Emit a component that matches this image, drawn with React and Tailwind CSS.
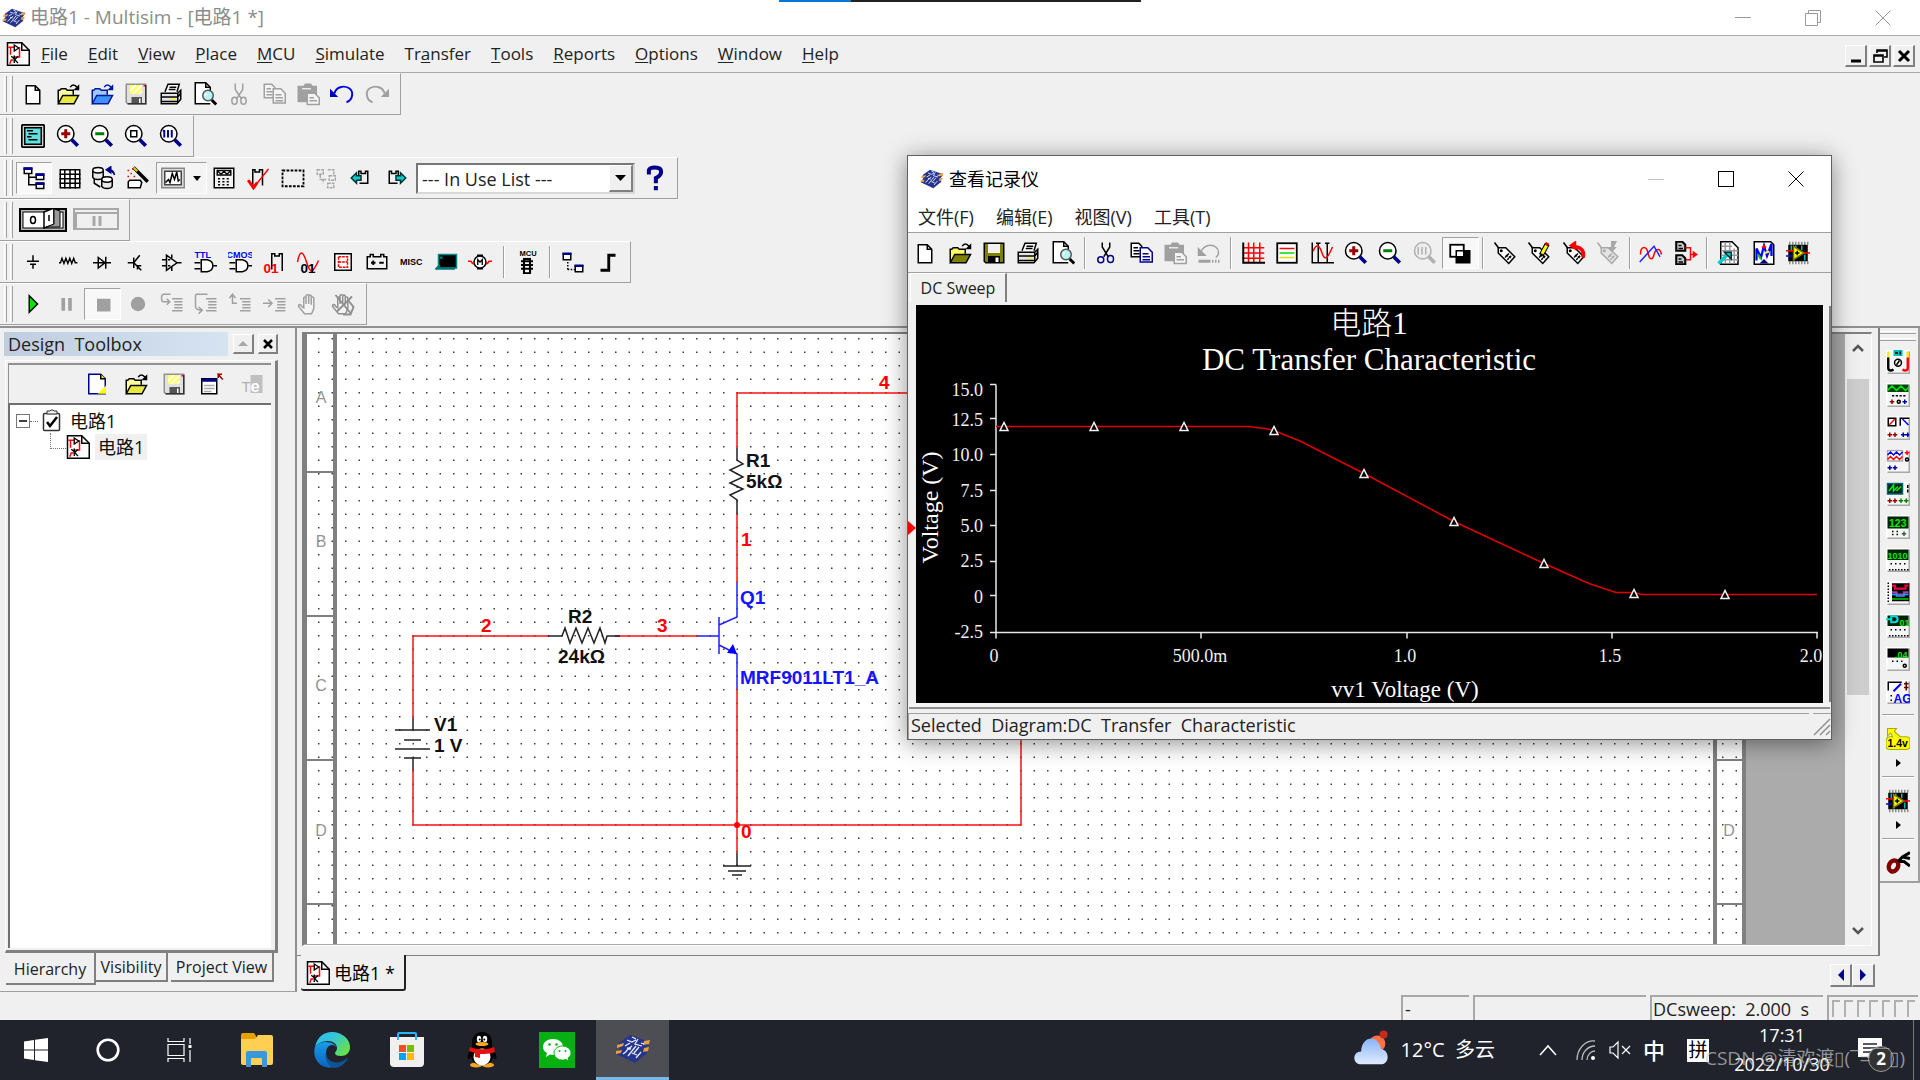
import React from "react";

const PIX = '"Liberation Sans", sans-serif';

function Svg({ children, className = "h-6 w-6", box = "0 0 16 16" }) {
  return (
    <svg viewBox={box} className={`${className} shrink-0`} fill="none" stroke="#000" strokeWidth="1" aria-hidden="true">
      {children}
    </svg>
  );
}

function T({ x, y, s = 6, f = "#000", children }) {
  return (
    <text x={x} y={y} fontSize={s} fill={f} stroke="none" fontWeight="700" fontFamily={PIX}>
      {children}
    </text>
  );
}

const folder = (back, front, line) => (
  <>
    <path d="M1.5 14V5.500h1l1-1h3l1 1h4v3" fill={back} stroke={line} />
    <path d="M1.500 14.500l3-5.500h10.500l-3 5.500z" fill={front} stroke={line} />
    <path d="M9.500 3.500c1-2 3-2 4.500 0" stroke={line} />
    <path d="M15.500 1.500v4h-4z" fill={line} stroke="none" />
  </>
);
const lens = (inner, c = "#000", h = "#00008b", f = "#fff") => (
  <>
    <circle cx="6.500" cy="6.500" r="5.500" fill={f} stroke={c} />
    <path d="M10.500 10.500l4 4" stroke={h} strokeWidth="2.500" />
    {inner}
  </>
);
const tag = (c = "#000") => (
  <>
    <path d="M1 1l3 4" stroke={c} />
    <path d="M3.500 4.500l5 0 6 6-4 4.500-7-7z" fill={c === "#000" ? "#fff" : "#e4e4e4"} stroke={c} />
    <circle cx="5.500" cy="6.500" r="1" fill={c} stroke="none" />
    <path d="M8 11l3-3M9.500 12.500l3-3M8.500 9.500l4 2" stroke={c} strokeDasharray="1.500 .7" />
  </>
);
const gate = (
  <>
    <path d="M5.500 6.500h4c5 1 5 7 0 8h-4z" fill="#fff" />
    <path d="M1 8.500h4M1 12.500h4M13.500 10.500h2.500" />
  </>
);
const steps = (
  <path d="M8 4.500h7M9.500 6.500h5.500M9.500 8.500h5.500M9.500 10.500h5.500M8 12.500h7" stroke="#a0a0a0" />
);
const sheet = <path d="M2.500.500h7.500l4 4v11h-11.500z" fill="#fff" />;
const printer = (y = "#ffff00") => (
  <>
    <path d="M4 6.500L6 1.500h7.500L12 6.500" fill="#fff" />
    <path d="M7 3.500h4.500M6.500 5h4.500" />
    <path d="M1.500 7.500h11l2-2v6l-2.500 3h-10.500z" fill="#e4e4e4" />
    <path d="M1.500 10h11l2-2.500M2 13h10M12.500 8v6" />
    <path d="M8 11.500h3" stroke={y} />
  </>
);
const schem = (
  <>
    <path d="M1 .500h9.500l5 5v10h-14.500z" fill="#fff" />
    <path d="M10.500.500v5h5" />
    <path d="M1.500 3.500h4M8 4h1v6h-4M3 4v4.500M2.500 14.500l1-2.500h1.500" stroke="#f00" />
    <path d="M5.500 2l3 2-3 2zM3.500 9.500l2.500 2 2-2M5.500 9v5M6 12l2 2" strokeWidth=".9" />
  </>
);
const opamp = (
  <>
    <path d="M2 1.500h13M2 14.500h13" stroke="#8c8c8c" strokeWidth="2" strokeDasharray="1 1" />
    <rect x="1.500" y="2.500" width="13" height="11" fill="#000" stroke="none" />
    <path d="M3.500 3v4M6.500 3v2M10.500 3v3M12.500 9v4M5.500 11v2" stroke="#00b4b4" />
    <path d="M5 3.500v9l7-4.500z" fill="#ff0" stroke="#770" />
    <path d="M0 6.500h5M12 8h4" stroke="#f00" />
    <path d="M0 10h4" stroke="#00f" />
    <path d="M6 8h3M7.500 6.500v3" />
  </>
);

const ICON = {
  new: <path d="M3.500 2.500h6l3 3v9h-9zM9.500 2.500v3h3" fill="#fff" />,
  open: folder("#ffff9c", "#e8e840", "#000"),
  openBlue: folder("#9cc8ff", "#4090f8", "#0018a0"),
  openOlive: folder("#ffff60", "#808000", "#000"),
  save: (
    <>
      <path d="M1.500 1.500h13v13h-12l-1-1z" fill="#e0e0e0" stroke="#909090" />
      <path d="M14.500 2v12.500h-12" stroke="#333" />
      <path d="M4 2h8v6h-8z" fill="#ffff70" stroke="none" />
      <path d="M4 6l4-4M6 8l6-6M10 8l2-2" stroke="#fff" />
      <path d="M5 10h7v4h-7z" fill="#555" stroke="none" />
      <path d="M10.500 11v3" stroke="#fff" />
      <path d="M13 2.500h1" stroke="#f00" />
    </>
  ),
  saveOlive: (
    <>
      <path d="M1.500 1.500h13v13h-12l-1-1z" fill="#808000" />
      <path d="M4 2h8v6h-8z" fill="#f0f0f0" stroke="none" />
      <path d="M4 10h8v4.500h-8z" fill="#000" stroke="none" />
      <path d="M10 11v3" stroke="#fff" strokeWidth="2" />
    </>
  ),
  print: printer(),
  preview: (
    <>
      <path d="M11.500 14.500h-10v-14h7l3 3v3" fill="#fff" />
      <path d="M8.500.500v3h3" />
      <circle cx="10" cy="9" r="3.500" fill="#b8f4f4" stroke="#555" />
      <path d="M9 7.500l-1 2" stroke="#fff" />
      <path d="M12.500 12l3 3" strokeWidth="2" />
    </>
  ),
  cutGray: (
    <g stroke="#a0a0a0">
      <path d="M5.500 1v4l4 6M10.500 1v4l-4 6" />
      <ellipse cx="5" cy="12.500" rx="1.800" ry="2.300" />
      <ellipse cx="11" cy="12.500" rx="1.800" ry="2.300" />
    </g>
  ),
  cut: (
    <>
      <path d="M5.500 1v3l4 6.500M10.500 1v3l-4 6.500" />
      <ellipse cx="4.500" cy="12.500" rx="2" ry="2" stroke="#00008b" />
      <ellipse cx="11" cy="12" rx="2" ry="2.300" stroke="#00008b" />
    </>
  ),
  copyGray: (
    <g stroke="#a0a0a0" fill="#f4f4f4">
      <path d="M1.500 1.500h5l2 2v7h-7zM3 4.500h3M3 6.500h4M3 8.500h4" />
      <path d="M7.500 4.500h5l3 3v6.500h-8zM9 8.500h4M9 10.500h5M9 12.500h5" />
    </g>
  ),
  copy: (
    <>
      <path d="M1.500 1.500h5l2 2v7h-7zM3 4.500h3M3 6.500h4M3 8.500h4" fill="#fff" />
      <path d="M7.500 4.500h5l3 3v6.500h-8zM9 8.500h4M9 10.500h5M9 12.500h5" fill="#fff" stroke="#00008b" />
    </>
  ),
  paste: (
    <>
      <path d="M1 2.500h4l1-1.500h4l1 1.500h3v11h-13z" fill="#a0a0a0" stroke="none" />
      <path d="M4 4.500h6" stroke="#e8e8e8" />
      <path d="M7.500 7.500h5l3 3v4.500h-8z" fill="#f4f4f4" stroke="#a0a0a0" />
      <path d="M9 10.500h3M9 12.500h5" stroke="#a0a0a0" />
    </>
  ),
  undo: (
    <>
      <path d="M3 7.500c1-4 6-5.500 9.500-3.500s3 8-1.500 9.500" stroke="#0000e8" strokeWidth="1.300" />
      <path d="M0 4.500v5.500h5.500z" fill="#0000c0" stroke="none" />
    </>
  ),
  redo: (
    <>
      <path d="M13 7.500c-1-4-6-5.500-9.500-3.500s-3 8 1.500 9.500" stroke="#a0a0a0" strokeWidth="1.300" />
      <path d="M16 4.500v5.500h-5.500z" fill="#a0a0a0" stroke="none" />
    </>
  ),
  undoGray: (
    <>
      <path d="M3 6.500c2-4 7-4.500 9.500-2.500s2.500 5 0 7" stroke="#a0a0a0" />
      <path d="M.500 4v6h6z" fill="#a0a0a0" stroke="none" />
      <path d="M1 13.500h8M10 13.500h1M12 13.500h1M14 13.500h1" stroke="#a0a0a0" strokeWidth="2" />
    </>
  ),
  fullscreen: (
    <>
      <rect x=".500" y=".500" width="15" height="15" rx="1" fill="#d0d0d0" strokeWidth="1.200" />
      <rect x="2.500" y="2.500" width="11" height="11" fill="#60e0e0" />
      <path d="M4 4.500h4M5 6.500h6M4 8.500h3M5 10.500h6" />
    </>
  ),
  zoomIn: lens(<path d="M6.500 3.500v6M3.500 6.500h6" stroke="#900" strokeWidth="2" />),
  zoomOut: lens(<path d="M3.500 6.500h6" stroke="#008000" strokeWidth="2" />),
  zoomArea: lens(<rect x="4.500" y="4.500" width="4" height="4" />),
  zoomFit: lens(<path d="M3.500 4v5M6 4v5M8.500 4v5M2.500 4.500h1" stroke="#00008b" strokeWidth="1.300" />),
  zoomGray: lens(<path d="M3.500 4v5M6 4v5M8.500 4v5" stroke="#b0b0b0" />, "#b0b0b0", "#b0b0b0", "#eee"),
  tree: (
    <>
      <path d="M4.500 5v7.500h5M4.500 7.500h5" />
      <g fill="#fff">
        <path d="M1.500 1.500h5v3.500h-5zM9.500 5.500h5v3.500h-5zM9.500 11.500h5v3.500h-5z" />
        <path d="M1 1.700h6M9 5.700h6M9 11.700h6" stroke="#00008b" strokeWidth="1.800" />
      </g>
    </>
  ),
  grid: (
    <>
      <rect x="1.500" y="2.500" width="13" height="12" fill="#fff" />
      <path d="M1 5.500h14M1 8.500h14M1 11.500h14M4.500 2v13M8 2v13M11.500 2v13" />
    </>
  ),
  database: (
    <g fill="#e8e8e8">
      <path d="M.500 3v4.500c1 2 6 2 7 0V3" />
      <ellipse cx="4" cy="2.800" rx="3.500" ry="1.800" fill="#fff" />
      <path d="M6.500 9v4.500c1 2 6 2 7 0V9" />
      <ellipse cx="10" cy="9" rx="3.500" ry="1.800" fill="#fff" />
      <path d="M1.500 8.500v3l4 2.500" fill="none" />
      <path d="M11.500 2.500c2 0 3 1 3.500 3.500M9.500 2.500l3-2v4z" fill="#00008b" stroke="#00008b" />
    </g>
  ),
  wand: (
    <>
      <path d="M5 1l9.500 9.500" strokeWidth="2.200" />
      <path d="M5 1l2.500 2.500" stroke="#cc0" strokeWidth="1.600" />
      <path d="M1 3h1M3 5h1M1 7h1M4 2h1M5 7h1" stroke="#e00" />
      <path d="M2.500 9.500h7l1 1.500-1 3.500h-8v-4z" fill="#fff" />
    </>
  ),
  graph: (
    <>
      <rect x=".500" y="1.500" width="15" height="13" fill="#ddd" stroke="#888" />
      <rect x="2.500" y="3.500" width="11" height="9" fill="#fff" stroke="#444" />
      <path d="M3 11l2-2 1 2 1.500-6 1.500 4 1.500-5 1 6 1-1" />
    </>
  ),
  calc: (
    <>
      <rect x="1.500" y="1.500" width="13" height="13" fill="#f4f4f4" />
      <rect x="3.500" y="3" width="9" height="3" fill="#fff" />
      <path d="M4 3.500l2 2 2-2 2 2 2-2" />
      <path d="M4 8.500h8M4 10.500h8M4 12.500h8" strokeDasharray="1.400 1.500" />
    </>
  ),
  check: (
    <>
      <path d="M4.500 13v-10.500h1.500v1.500h3v-1.500h2V13" />
      <path d="M1.500 9.500l3.500 5L15 2" stroke="#f00" />
      <path d="M1.500 9.500l3.500 5 2.500-3.500" stroke="#f00" strokeWidth="2" />
    </>
  ),
  select: <rect x="1" y="3" width="14" height="10.500" strokeDasharray="1.800 .9" strokeWidth="1.200" />,
  swap: (
    <g stroke="#a8a8a8">
      <path d="M1.500 2.500h4v3h-4zM3.500 6v3h4M8.500 2.500h4v4M9.500 6.500h4v3h-4zM5.500 8.500v3M8.500 11.500h4v3h-4z" strokeDasharray="2 .6" />
    </g>
  ),
  backAnn: (
    <>
      <path d="M6.500 6V3.500h1.500v1.500h3v-1.500h1.500v8h-5.500" />
      <path d="M1.500 8l3.500-3.500v2h3v3H5v2z" fill="#0cc" stroke="#033" />
    </>
  ),
  fwdAnn: (
    <>
      <path d="M9.500 6V3.500h-1.500v1.500h-3v-1.500h-1.500v8h5.500" />
      <path d="M14.500 8l-3.500-3.500v2h-3v3h3v2z" fill="#0cc" stroke="#033" />
    </>
  ),
  source: <path d="M8 3.500v4M4 7.500h8M6 9.500h4M8 10v2.500" />,
  resistor: <path d="M2 8.500h1l1-3 1.300 3.500 1.300-3.500 1.300 3.500 1.300-3.500 1.300 3.500 1.300-3.500 1 3h1.500" strokeWidth=".9" />,
  diode: <path d="M2 8.500h12M5.500 5v7l4.500-3.500zM10.500 4.500v8" />,
  transistor: <path d="M2.500 8.500h3.500M6.500 5v7M6.500 8.500l4-5M6.500 8.500l5 5M9 10.500v2.500M8.500 10.500h3" />,
  opampIcon: (
    <path d="M5 3.500v10l7-5zM2 6.500h3M2 10.500h3M12 8.500h3M8.500 3v3M8.500 11v3M6 6.500h1.500M6 10.500h1.500" />
  ),
  ttl: (
    <>
      <T x="1" y="5" s="6" f="#00f">TTL</T>
      {gate}
    </>
  ),
  cmos: (
    <>
      <T x="-1" y="5" s="6" f="#00f">CMOS</T>
      {gate}
    </>
  ),
  miscDigital: (
    <>
      <path d="M6.500 13V2.500h2v1.500h3v-1.500h2V14" />
      <T x="1" y="15" s="9" f="#f00">01</T>
    </>
  ),
  mixed: (
    <>
      <path d="M1 8c1.500-8 3.500-8 6 0s4 8 8-1" stroke="#f00" />
      <T x="3" y="15" s="9">01</T>
    </>
  ),
  indicator: (
    <>
      <rect x="2.500" y="2.500" width="11" height="11" fill="#fff" />
      <path d="M5 4.500h6v7H5zM5 8h6" stroke="#f00" strokeDasharray="1.800 .6" />
    </>
  ),
  power: (
    <>
      <path d="M1.500 4.500h2v-1.500h2v1.500h5v-1.500h2v1.500h2v8h-13z" />
      <path d="M4 8.500h3M5.500 7v3M9.500 8.500h3" strokeWidth="1.200" />
    </>
  ),
  misc: <T x="0" y="10" s="6">MISC</T>,
  periph: (
    <>
      <rect x="3" y="3" width="12" height="9" fill="#000" stroke="#088" />
      <path d="M1 12.500h13M4 10l-3 3M4 5h1v1" stroke="#077" strokeWidth="1.400" />
    </>
  ),
  motor: (
    <>
      <circle cx="8" cy="8" r="4" fill="#fff" />
      <path d="M0 7.500h2l1 1.500h1M16 7.500h-2l-1 1.500h-1" stroke="#f00" />
      <path d="M6.500 10V6.500L8 8l1.500-1.500V10" strokeWidth=".9" />
      <path d="M6 3.500h4M6 12.500h4" />
    </>
  ),
  mcu: (
    <>
      <T x="3" y="4" s="5">MCU</T>
      <rect x="6" y="6" width="4" height="9.500" fill="#fff" strokeWidth="1.400" />
      <path d="M4 7.500h8M4 10h8M4 12.500h8" strokeWidth="1.200" />
    </>
  ),
  hier: (
    <>
      <rect x="1.500" y="2.500" width="5" height="4" fill="#fff" />
      <rect x="9.500" y="10.500" width="5" height="4" fill="#fff" />
      <path d="M1 2.500h6M9 10.500h6" stroke="#00008b" strokeWidth="1.800" />
      <path d="M4.500 8v5M4.500 13h5" strokeDasharray="1 1" />
    </>
  ),
  bus: <path d="M3 13.500h5.500V3.500H13" strokeWidth="1.900" />,
  play: <path d="M5.500 2.500v11l5.500-5.500z" fill="#00e800" />,
  pause: <path d="M5.500 4v8.500M10 4v8.500" stroke="#a0a0a0" strokeWidth="2.400" />,
  stop: <rect x="4" y="4.500" width="9" height="8.500" fill="#a0a0a0" stroke="none" />,
  record: <circle cx="8" cy="8" r="4.800" fill="#a0a0a0" stroke="none" />,
  stepInto: (
    <>
      {steps}
      <path d="M7 1.500H2.500c-2 0-2 5 0 5h4M4.500 4.500l2 2-2 2" stroke="#a0a0a0" />
    </>
  ),
  stepOver: (
    <>
      {steps}
      <path d="M9 1.500H2c-1 0-1 1-1 1v7c0 2 1 2.500 4 2.500M3 10l2.500 2L3 14.500" stroke="#a0a0a0" />
    </>
  ),
  stepOut: (
    <>
      {steps}
      <path d="M6 7.500H3V2M1 4l2-2.500L5 4" stroke="#a0a0a0" />
    </>
  ),
  runTo: (
    <>
      {steps}
      <path d="M0 7.500h6M3.500 5l2.500 2.500L3.500 10" stroke="#a0a0a0" />
    </>
  ),
  hand: (
    <path d="M5 14.500l-4-5c0-1.500 1.500-1.500 2 0l1.500 1V4c0-1 1.500-1 1.500 0v4V2.500c0-1 1.800-1 1.800 0V8 2.800c0-1 1.700-1 1.700 0V8.500 4c0-1 1.700-1 1.700 0v7l-1.500 3.500z" stroke="#a0a0a0" fill="#f4f4f4" />
  ),
  handOff: (
    <g stroke="#909090">
      <path d="M5 14.500l-4-5c0-1.500 1.500-1.500 2 0l1.500 1V4c0-1 1.500-1 1.500 0v4V2.500c0-1 1.800-1 1.800 0V8 2.800c0-1 1.700-1 1.700 0V8.500 4c0-1 1.700-1 1.700 0v7l-1.500 3.500z" fill="#f4f4f4" />
      <path d="M3 2l10 12M14 3L4 13M11 5l4 5-2 5H8" strokeWidth="1.300" />
    </g>
  ),
  plotGrid: (
    <>
      <path d="M1 4.500h14.500M1 8h14.500M1 11.500h14.500M5 1v13.500M8.500 1v13.500M12.500 1v13.500" stroke="#f00" />
      <path d="M1.500 1v13.500H16" strokeWidth="1.300" />
    </>
  ),
  legend: (
    <>
      <rect x="1.500" y="1.500" width="13" height="13" fill="#fff" strokeWidth="1.200" />
      <path d="M3 5h10" stroke="#f00" />
      <path d="M3 8h10" stroke="#0d0" />
      <path d="M3 11h10" stroke="#dd0" />
    </>
  ),
  cursors: (
    <>
      <path d="M1.500 1v13.500H16M5.500 1v13M11.500 1v13M4 1.500h3M10 1.500h3" />
      <path d="M2 7c2-5 4-5 6 1s4 3 7-4" stroke="#f00" />
    </>
  ),
  invert: (
    <>
      <rect x="5.500" y="6.500" width="9" height="8" fill="#000" />
      <rect x="1.500" y="2.500" width="9" height="8" fill="#fff" strokeWidth="1.200" />
      <rect x="5.500" y="6.500" width="5" height="4" fill="#fff" />
    </>
  ),
  tag: tag(),
  tagEdit: (
    <>
      {tag()}
      <path d="M9.500 9.500l4-7.500" strokeWidth="3.400" />
      <path d="M10 8.500l3-5.500" stroke="#ff0" strokeWidth="2" />
      <path d="M13 2.800l.8-1.500" stroke="#d00" strokeWidth="2.500" />
    </>
  ),
  tagUndo: (
    <>
      {tag()}
      <path d="M14 11c1-4-1-7-5-7" stroke="#f00" strokeWidth="2.500" />
      <path d="M4.500 3l5-3.500v7z" fill="#f00" stroke="none" />
    </>
  ),
  tagGray: (
    <>
      {tag("#a8a8a8")}
      <path d="M14 0h-4v4h-3l3.500 3.500L14 4h-2z" fill="#a8a8a8" stroke="none" />
    </>
  ),
  traces: (
    <>
      <path d="M1 9c0-6 4-6 5-1s3 5 4 1 4-5 5 0" stroke="#f00" />
      <path d="M.500 14L10 3.500l4 7" stroke="#22f" />
    </>
  ),
  overlay: (
    <>
      <path d="M1.500.500h4l2 2v4h-6zM1.500 9.500h4l2 2v4h-6z" fill="#ccc" strokeWidth="1.400" />
      <path d="M3 3h2M3 5h3M3 12h2M3 14h3" />
      <path d="M7.500 4.500h3.500v8H8M11 9h3" stroke="#f00" />
      <path d="M12.500 6.500L16 9l-3.500 2.500z" fill="#f00" stroke="none" />
    </>
  ),
  excel: (
    <>
      {sheet}
      <path d="M3 3.500h7M3 6.500h11M3 9.500h11M3 12.500h11M5.500 1v14M8.500 1v14M11.500 5v10" stroke="#999" />
      <path d="M1 15l6-6" stroke="#0cc" strokeWidth="2.200" />
      <path d="M5 7.500h4.500V12z" fill="#0cc" stroke="#033" />
    </>
  ),
  labview: (
    <>
      <path d="M1.500.500h11l2 2v13h-13z" fill="#fff" />
      <path d="M3 13V5l3 6 2-8 2 7 3-8v8" stroke="#00f" strokeWidth="1.500" />
      <path d="M4 9l2 3" stroke="#0c0" strokeWidth="1.500" />
      <path d="M8.500 8l3-1" stroke="#ff0" strokeWidth="1.500" />
      <path d="M8 2v3M6.500 4h3" stroke="#f00" />
      <path d="M5 15l3-3 3 3z" fill="#00008b" stroke="none" />
    </>
  ),
  elvis: opamp,
  docNew: (
    <>
      <path d="M2.500 1.500h8l3 3v10h-11z" fill="#fff" stroke="#00008b" />
      <path d="M14 9v5.500H8.500z" fill="#ff0" stroke="none" />
      <path d="M10.500 1.500v3h3" fill="#ff0" />
    </>
  ),
  windowOut: (
    <>
      <rect x=".500" y="4.500" width="10" height="10" fill="#fff" />
      <path d="M.500 5.500h10" stroke="#00008b" strokeWidth="2" />
      <path d="M2 9h7M2 11h7M2 13h5" stroke="#aaa" />
      <path d="M11 1.500h3M11.500 1v3M11 1l3.500 4" stroke="#900" />
    </>
  ),
  te: (
    <>
      <rect x="7" y="2" width="8" height="12" fill="#c0c0c0" stroke="none" />
      <text x="1" y="13" fontSize="10" fill="#b0b0b0" stroke="none" fontFamily={PIX}>T</text>
      <text x="7" y="13" fontSize="11" fill="#fff" stroke="none" fontWeight="700" fontFamily={PIX}>e</text>
    </>
  ),
  schem,
};

const inst = (body) => (
  <>
    <path d="M0 0h16v16H0z" fill="#f6f6f6" stroke="none" />
    <path d="M.500 15V.500H15" stroke="#fff" />
    <path d="M1 15.500h14.500V1" stroke="#a8a8a8" />
    {body}
  </>
);
const INSTRUMENTS = [
  ["Multimeter", inst(<><rect x="5" y="0" width="6" height="4" fill="#0bb" stroke="none" /><path d="M6 2h2M9.500 1v2" /><circle cx="8" cy="8.500" r="2.300" fill="#fff" /><path d="M7 10l2-3" /><path d="M1.500 1v4M14.500 1v4" stroke="#ee0" strokeWidth="1.500" /><path d="M1.500 5v7c0 2 2 2 3.500 1" strokeWidth="1.600" /><path d="M14.500 5v7c0 2-2 2-3.500 1" stroke="#f00" strokeWidth="1.600" /></>)],
  ["Function generator", inst(<><path d="M1 1h14v5H1z" fill="#041" stroke="none" /><path d="M1 5l3-3 3 3 3-3 3 3 2-2" stroke="#0e0" /><path d="M4 8.500h9" strokeDasharray="1.500 1" /><path d="M2.500 12.500h3M4 11v3" stroke="#900" /><circle cx="8.500" cy="12.500" r="1" /><path d="M11 12.500h3M12.500 11v3" stroke="#00a" /></>)],
  ["Wattmeter", inst(<><path d="M1.500 6.500v-5h5v5zM9.500 6.500v-5h6" fill="#fff" /><path d="M2 6l4-4" stroke="#f00" /><path d="M11 2l4 4" stroke="#00f" /><path d="M1 12.500h3M2.500 11v3M4.500 12.500h3M6 11v3" stroke="#900" /><path d="M10 12.500h3M11.500 11v3M13 12.500h2.500M14.500 11v3" stroke="#00a" /></>)],
  ["Oscilloscope", inst(<><path d="M1 1h10v7H1z" fill="#fff" stroke="#aaa" /><path d="M1 4l2-2 2 2 2-2 2 2 2-2" stroke="#00f" /><path d="M1 7l2-2 2 2 2-2 2 2 2-2" stroke="#f00" /><path d="M12.500 2.500h3M14 1v3" stroke="#f00" /><circle cx="14" cy="7" r="1" /><path d="M1 12.500h3M2.500 11v3M4.500 12.500h3M6 11v3" stroke="#00a" /></>)],
  ["Four channel oscilloscope", inst(<><path d="M1 1h10v7H1z" fill="#022" stroke="#066" /><path d="M2 6l3-4v4l3-3M7 6l3-3" stroke="#0e0" /><path d="M14.500 2v2M14.500 5v2" /><path d="M1 12.500h3M2.500 11v3M4.500 12.500h3M6 11v3" stroke="#900" /><path d="M8.500 12.500h3M10 11v3M12 12.500h3M13.500 11v3" stroke="#080" /></>)],
  ["Frequency counter", inst(<><path d="M1 1h14v8H1z" fill="#020" stroke="none" /><T x="2" y="8" s="7" f="#0e0">123</T><path d="M4 11h1M7 11h1M4 13h1M7 13h1" /><path d="M10.500 12.500h3M12 11v3" stroke="#363" /></>)],
  ["Word generator", inst(<><path d="M1 1h14v7H1z" fill="#020" stroke="none" /><T x="1" y="7" s="6" f="#0e0">1010</T><path d="M3 10.500h10" strokeDasharray="1 2" /><path d="M2 14.500h13" strokeDasharray="1 1" /></>)],
  ["Logic analyzer", inst(<><path d="M4 1.500h11.500v12H4z" fill="#000" stroke="none" /><path d="M4 3h2v2h7V3h2" stroke="#e04" strokeWidth="1.500" /><path d="M4 7.500h3v1.500h5V7.500h3" stroke="#a040c0" strokeWidth="1.500" /><path d="M4 9h3v1h5V9h3" stroke="#0ae" /><path d="M4 12h11" stroke="#0c0" /><path d="M1.500 1v14" strokeDasharray="1 1" /></>)],
  ["Logic converter", inst(<><path d="M1 1h14v7H1z" fill="#020" stroke="none" /><path d="M0 3.500h3M3.500 1.500h2c3 0 3 4 0 4h-2z" stroke="#0dd" strokeWidth="1.400" /><T x="9" y="8" s="6" f="#0e0">01</T><path d="M3 10.500h10" strokeDasharray="1 2" /><path d="M2 14.500h13" strokeDasharray="1 1" /></>)],
  ["IV analyzer", inst(<><path d="M1 1h14v6H1z" fill="#000" stroke="none" /><T x="6" y="7" s="6" f="#0e0">.04</T><path d="M4 9.500h7" strokeDasharray="1 2" /><circle cx="12.500" cy="12.500" r="1" /></>)],
  ["Agilent function generator", inst(<><path d="M1.500 7V1.500h9" fill="#fff" /><path d="M5 7.500l5-5" stroke="#00f" strokeWidth="1.300" /><path d="M12 2.500h3M13.500 1v6M12 5h3" stroke="#600" /><T x="5" y="15" s="8" f="#00f">AG</T><path d="M3.500 10v1M3.500 13v1" /></>)],
];

function Logo({ className }) {
  return (
    <svg viewBox="0 0 36 30" className={`${className} shrink-0`} fill="none" aria-hidden="true">
      <path d="M15 1l20 7-5 7 2 4-12 10L1 20l4-6-1-5z" fill="#26358c" />
      <path d="M2 11l7-2-1 3-6 2zM29 7l6-1-1 4-6 1zM29 14l5-1-1 4-5 1zM1 17l6-1-1 3-5 1z" fill="#e8a040" />
      <path d="M12 6l5 2 4-2M17 3l4 2M23 5l-3 5 7 2M10 12l5-3M11 17l6-5M8 20l4-3M13 22l8-10M24 13l-5 6M17 19l5 2M21 24l5-6M12 14l4 1M26 9l3 1" stroke="#e8ecff" strokeWidth="1.300" />
    </svg>
  );
}

function Btn({ name, icon, pressed, className = "h-8 flex-1" }) {
  return (
    <button
      type="button"
      aria-label={name}
      className={`flex min-w-0 items-center justify-center ${className} ${pressed ? "border border-t-[#a0a0a0] border-r-white border-b-white border-l-[#a0a0a0] bg-[#f8f8f8]" : ""}`}
    >
      <Svg>{ICON[icon || name]}</Svg>
    </button>
  );
}

function Sep({ className = "w-3" }) {
  return (
    <div className={`flex h-8 shrink-0 justify-center ${className}`}>
      <div className="w-[2px] border-r border-l border-r-white border-l-[#a0a0a0]" />
    </div>
  );
}

function Bar({ label, className, children }) {
  return (
    <div role="toolbar" aria-label={label} className={`flex h-[42px] items-center border-t border-r border-b border-t-white border-r-[#a0a0a0] border-b-[#a0a0a0] ${className}`}>
      <div className="mr-[3px] flex h-9 w-[13px] shrink-0 justify-end gap-[3px]">
        <div className="w-[3px] border-r border-l border-r-[#a0a0a0] border-l-white" />
        <div className="w-[3px] border-r border-l border-r-[#a0a0a0] border-l-white" />
      </div>
      {children}
    </div>
  );
}

const MENUS = [
  ["", "F", "ile"], ["", "E", "dit"], ["", "V", "iew"], ["", "P", "lace"], ["", "M", "CU"], ["", "S", "imulate"],
  ["Tr", "a", "nsfer"], ["", "T", "ools"], ["", "R", "eports"], ["", "O", "ptions"], ["", "W", "indow"], ["", "H", "elp"],
];

const raised = "border-t border-l border-r-2 border-b-2 border-t-white border-l-white border-r-[#808080] border-b-[#808080]";

function Schematic() {
  const rows = [472, 616, 760, 904];
  return (
    <svg width="1442" height="610" viewBox="304 334 1442 610" className="shrink-0" fill="none" strokeWidth="2" role="img" aria-label="Schematic">
      <defs>
        <pattern id="dots" x="318" y="338" width="27" height="27" patternUnits="userSpaceOnUse">
          <path d="M0 0h1.500v1.500H0zM13.500 0h1.500v1.500h-1.500zM0 13.500h1.500v1.500H0zM13.500 13.500h1.500v1.500h-1.500z" fill="#3c3c3c" />
        </pattern>
      </defs>
      <rect x="304" y="334" width="1442" height="610" fill="#fff" />
      <rect x="308" y="334" width="1432" height="610" fill="url(#dots)" />
      <path d="M304 334h3v610h-3zM333 334h4v610h-4zM1713 334h4v610h-4zM1742 334h4v610h-4z" fill="#808080" />
      {rows.map((y) => (
        <path key={y} d={`M307 ${y}h26M1717 ${y}h25`} stroke="#808080" />
      ))}
      <g fill="#949494" fontSize="16" fontFamily={PIX} textAnchor="middle">
        <text x="321" y="403">A</text>
        <text x="321" y="547">B</text>
        <text x="321" y="691">C</text>
        <text x="321" y="836">D</text>
        <text x="1729" y="836">D</text>
      </g>
      <g stroke="#ff1010" strokeWidth="1.500">
        <path d="M737 448V393h284v432H413v-55M737 514v69M737 689v164M413 718v-82h135M615 636h82" />
      </g>
      <circle cx="737" cy="825" r="3" fill="#f00" />
      <g stroke="#222">
        <path d="M737 448v12l6 4-13 6 13 7-13 6 13 6-13 6 7 5v14" strokeWidth="1.500" />
        <path d="M548 636h14l3-8 5 15 6-15 6 15 6-15 6 15 6-15 5 15 2-7h13" strokeWidth="1.500" />
        <path d="M413 718v12M395 730h35M404 740h17M395 749h35M404 758h17M413 758v12" strokeWidth="1.500" />
        <path d="M737 853v13M723 866h28M728 871h18M732 875h10" strokeWidth="1.500" />
      </g>
      <g stroke="#2020ff">
        <path d="M737 583v34l-18 8M719 617v37M697 636h22M719 645l18 9v35" strokeWidth="1.500" />
        <path d="M727 653l6-9 4 10z" fill="#00f" stroke="none" />
      </g>
      <g fontSize="19" fontWeight="700" fontFamily={PIX}>
        <g fill="#111">
          <text x="746" y="467">R1</text>
          <text x="746" y="488">5kΩ</text>
          <text x="568" y="623">R2</text>
          <text x="558" y="663">24kΩ</text>
          <text x="434" y="731">V1</text>
          <text x="434" y="752">1 V</text>
        </g>
        <g fill="#1414ff">
          <text x="740" y="604">Q1</text>
          <text x="740" y="684">MRF9011LT1_A</text>
        </g>
        <g fill="#f00">
          <text x="481" y="632">2</text>
          <text x="657" y="632">3</text>
          <text x="879" y="389">4</text>
          <text x="741" y="546">1</text>
          <text x="741" y="838">0</text>
        </g>
      </g>
    </svg>
  );
}

const YT = [[384, "15.0", 389], [418, "12.5", 419], [454, "10.0", 454], [490, "7.5", 490], [525, "5.0", 525], [561, "2.5", 560], [595, "0", 596], [632, "-2.5", 631]];
const XT = [[996, "0", 995], [1201, "500.0m", 1201], [1407, "1.0", 1406], [1612, "1.5", 1611], [1817, "2.0", 1812]];
const MARKS = [[1004, 426], [1094, 426], [1184, 426], [1274, 430], [1364, 473], [1454, 521], [1544, 563], [1634, 593], [1725, 594]];

function Chart() {
  return (
    <svg viewBox="916 305 907 397" className="block h-full w-full bg-black" fill="none" role="img" aria-label="DC Transfer Characteristic">
      <path d="M996 384v248h822M996 632v6M1201 632v6M1407 632v6M1612 632v6M1817 632v6" stroke="#e8e8e8" strokeWidth="1.500" />
      {YT.map(([y, t, ty]) => (
        <g key={t}>
          <path d={`M990 ${y}h6`} stroke="#e8e8e8" strokeWidth="1.500" />
          <text x="983" y={ty + 6} fontSize="18" textAnchor="end" fill="#f0f0f0" fontFamily='"Liberation Serif", serif'>{t}</text>
        </g>
      ))}
      {XT.map(([, t, tx]) => (
        <text key={t} x={tx - 1} y="661" fontSize="18" textAnchor="middle" fill="#f0f0f0" fontFamily='"Liberation Serif", serif'>{t}</text>
      ))}
      <path d="M996 426h252l17 2 9 2 27 11 63 32 90 48 90 42 45 20 27 9h18l8 2h175" stroke="#e00000" strokeWidth="1.500" />
      {MARKS.map(([x, y]) => (
        <path key={x} d={`M${x} ${y - 4}l-4 8h8z`} fill="#000" stroke="#f4f4f4" strokeWidth="1.500" />
      ))}
      <g fill="#fff" textAnchor="middle" fontFamily='"Liberation Serif", "Noto Sans CJK SC", serif'>
        <text x="1369" y="333" fontSize="31" fontWeight="300">电路1</text>
        <text x="1369" y="369" fontSize="31">DC Transfer Characteristic</text>
        <text x="1405" y="696" fontSize="23">vv1 Voltage (V)</text>
        <text transform="translate(938 507) rotate(-90)" fontSize="24">Voltage (V)</text>
      </g>
    </svg>
  );
}

const DIALOG_TOOLS = [
  "new", "openOlive", "saveOlive", "print", "preview", "|", "cut", "copy", "paste", "undoGray", "|",
  "plotGrid", "legend", "cursors", "zoomIn", "zoomOut", "zoomGray", "invert", "|",
  "tag", "tagEdit", "tagUndo", "tagGray", "|", "traces", "overlay", "|", "excel", "labview", "elvis",
];

function Grapher() {
  return (
    <section aria-label="查看记录仪" className="absolute top-[155px] left-[907px] flex h-[585px] w-[925px] flex-col border border-[#606060] bg-[#f0f0f0] shadow-[0_3px_22px_rgba(0,0,0,0.45)]">
      <header className="flex h-[45px] shrink-0 items-center bg-white pl-3">
        <Logo className="h-5 w-6" />
        <h2 className="ml-[5px] flex-1 text-[18px] leading-6">查看记录仪</h2>
        <button type="button" aria-label="Minimize" className="flex w-[70px] justify-center"><Svg className="h-4 w-4"><path d="M0 8.500h16" stroke="#c4c4c4" /></Svg></button>
        <button type="button" aria-label="Maximize" className="flex w-[70px] justify-center"><Svg className="h-4 w-4"><rect x=".500" y=".500" width="15" height="15" /></Svg></button>
        <button type="button" aria-label="Close" className="flex w-[70px] justify-center"><Svg className="h-4 w-4"><path d="M.500.500l15 15M15.500.500l-15 15" /></Svg></button>
      </header>
      <nav className="flex h-[32px] shrink-0 gap-[22px] border-b border-[#a0a0a0] bg-white pl-[10px] text-[18px] leading-7 text-[#222]">
        {["文件(F)", "编辑(E)", "视图(V)", "工具(T)"].map((m) => (
          <button type="button" key={m}>{m}</button>
        ))}
      </nav>
      <div role="toolbar" aria-label="Grapher tools" className="flex h-10 shrink-0 items-center border-b border-[#a0a0a0] pr-4">
        {DIALOG_TOOLS.map((n, i) =>
          n === "|" ? <Sep key={i} className="w-[9px]" /> : <Btn key={i} name={n} pressed={n === "invert"} />
        )}
      </div>
      <div className="flex h-8 shrink-0 items-end px-[2px] pb-[3px]">
        <button type="button" className="h-[29px] w-[97px] border-t border-r-2 border-l border-t-white border-r-[#808080] border-l-white text-[16px] leading-6 text-[#222]">DC Sweep</button>
      </div>
      <div className="flex min-h-0 flex-1">
        <div className="flex w-2 shrink-0 items-center">
          <svg viewBox="0 0 8 14" className="mt-12 h-[14px] w-2" aria-hidden="true"><path d="M0 0l8 7-8 7z" fill="#f00" /></svg>
        </div>
        <div className="min-w-0 flex-1"><Chart /></div>
        <div className="my-[1px] w-2 shrink-0 border-r-2 border-l border-r-[#808080] border-l-white" />
      </div>
      <div className="mx-[1px] h-[6px] shrink-0 border-b-2 border-[#909090] bg-[#f4f4f4]" />
      <footer className="mt-1 flex h-[26px] shrink-0 text-[18px] leading-[22px] text-[#222]">
        <div className="mr-1 flex-1 border-t border-l border-[#a0a0a0] pl-[2px]">Selected&nbsp; Diagram:DC&nbsp; Transfer&nbsp; Characteristic</div>
        <div className="w-[18px] border-t border-[#a0a0a0]">
          <Svg className="mt-1 h-[18px] w-[18px]" box="0 0 18 18"><path d="M1 17L17 1M7 17L17 7M13 17l4-4" stroke="#909090" strokeWidth="1.500" /></Svg>
        </div>
      </footer>
    </section>
  );
}

function DesignToolbox() {
  const tab = "border-r-2 border-b-2 border-r-[#808080] border-b-[#808080]";
  return (
    <aside className="flex w-[297px] shrink-0 flex-col">
      <div className="flex h-[664px] flex-col border-r-2 border-b border-r-[#909090] border-b-[#a0a0a0] pr-[17px]">
        <div className="mt-[4px] ml-1 flex h-6 items-center">
          <h2 className="flex h-6 flex-1 items-center bg-linear-to-r from-[#bfcddd] to-[#d6e4f2] pl-1 text-[18px] text-[#222]">Design&nbsp; Toolbox</h2>
          <button type="button" aria-label="Collapse" className={`ml-[5px] flex h-5 w-[21px] items-center justify-center ${raised}`}>
            <Svg className="h-3 w-3" box="0 0 12 12"><path d="M1 8l5-5 5 5z" fill="#a8a8a8" stroke="none" /></Svg>
          </button>
          <button type="button" aria-label="Close" className={`ml-1 flex h-5 w-5 items-center justify-center ${raised}`}>
            <Svg className="h-3 w-3" box="0 0 12 12"><path d="M2 2l8 8M10 2l-8 8" strokeWidth="2.500" /></Svg>
          </button>
        </div>
        <div className="mt-[4px] ml-[5px] flex min-h-0 flex-1 flex-col border-t border-l border-r-[3px] border-b-[3px] border-t-white border-l-white border-r-[#808080] border-b-[#808080] p-[2px] pr-1">
          <div className="flex h-10 shrink-0 items-center border-t-2 border-l border-[#909090] pl-[69px]">
            {["docNew", "open", "save", "windowOut", "te"].map((n) => (
              <Btn key={n} name={n} className="h-8 w-[39px]" />
            ))}
          </div>
          <ul role="tree" className="min-h-0 flex-1 border-t-2 border-l-2 border-[#707070] bg-white pt-[3px] pl-[6px] text-[18px] leading-[26px] text-[#111]">
            <li role="treeitem" className="flex h-[26px] items-center">
              <Svg className="h-[14px] w-[14px]" box="0 0 14 14"><rect x=".500" y=".500" width="13" height="13" fill="#fff" stroke="#777" /><path d="M3 7h8" strokeWidth="1.500" /></Svg>
              <span className="mr-1 w-2 border-t border-dotted border-[#777]" />
              <Svg className="h-6 w-5" box="0 0 20 24"><rect x="1.500" y="4.500" width="16" height="17" rx="1" fill="#fff" stroke="#333" strokeWidth="1.500" /><path d="M5 5V2h3l1-1h2l1 1h3v3z" fill="#eee" stroke="#333" /><path d="M5 13l3 4 7-9" strokeWidth="2.500" /></Svg>
              <span className="ml-2">电路1</span>
            </li>
            <li role="treeitem" className="ml-[34px] flex h-[26px] items-center">
              <span className="mb-3 h-4 w-4 border-b border-l border-dotted border-[#777]" />
              <Svg>{schem}</Svg>
              <span className="ml-[5px] bg-[#f0f0f0] px-[3px]">电路1</span>
            </li>
          </ul>
        </div>
        <div role="tablist" className="mb-[6px] ml-[6px] flex h-8 shrink-0 items-start text-[16px] text-[#222]">
          <button type="button" role="tab" aria-selected="true" className={`h-8 w-[90px] pt-[2px] ${tab}`}>Hierarchy</button>
          <button type="button" role="tab" className={`h-[29px] w-[72px] ${tab}`}>Visibility</button>
          <button type="button" role="tab" className={`ml-[3px] h-[29px] w-[103px] ${tab}`}>Project View</button>
        </div>
      </div>
    </aside>
  );
}

function VBtn({ name, children }) {
  return (
    <button type="button" aria-label={name} className="flex h-[33px] w-9 shrink-0 items-center justify-center">
      <Svg>{children}</Svg>
    </button>
  );
}
const VSep = () => <div className="my-[6px] h-[2px] w-8 shrink-0 border-t border-b border-t-[#a0a0a0] border-b-white" />;
const VArrow = () => (
  <button type="button" aria-label="More" className="flex h-[15px] shrink-0 items-center justify-center">
    <Svg className="h-2 w-2" box="0 0 8 8"><path d="M2 0v8l5-4z" fill="#000" stroke="none" /></Svg>
  </button>
);

function Taskbar() {
  const cell = "flex h-full w-[75px] shrink-0 items-center justify-center";
  return (
    <footer className="relative flex h-[60px] shrink-0 items-center bg-[#20232b] text-white">
      <button type="button" aria-label="Start" className="flex h-full w-[72px] items-center justify-center">
        <svg viewBox="0 0 24 24" className="h-6 w-6" fill="#fff"><path d="M0 3.500l10-1.500v9.500H0zM11 1.800L24 0v11.500H11zM0 12.500h10V22L0 20.500zM11 12.500h13V24l-13-1.800z" /></svg>
      </button>
      <button type="button" aria-label="Search" className="flex h-full w-[72px] items-center justify-center">
        <svg viewBox="0 0 24 24" className="h-6 w-6" fill="none"><circle cx="12" cy="12" r="10.300" stroke="#fff" strokeWidth="2.600" /></svg>
      </button>
      <button type="button" aria-label="Task view" className="flex h-full w-[72px] items-center justify-center">
        <svg viewBox="0 0 26 24" className="h-6 w-[26px]" fill="none" stroke="#fff" strokeWidth="1.200"><path d="M1 0v3.500h16V0M1 24v-3.500h16V24M1 6.500h16v11H1zM23 0v6M23 12v12" /><path d="M21.500 7h3v3h-3z" fill="#fff" stroke="none" /></svg>
      </button>
      <button type="button" aria-label="File Explorer" className={`ml-[3px] ${cell}`}>
        <svg viewBox="0 0 32 34" className="h-[34px] w-8"><path d="M0 2q0-2 2-2h11l2 3v4H0z" fill="#e8a000" /><path d="M0 6h14l3-4h13q2 0 2 2v26q0 2-2 2H2q-2 0-2-2z" fill="#ffcf54" /><path d="M5 20q0-2 2-2h17q2 0 2 2v14h-5v-8q0-1-1-1h-9q-1 0-1 1v8H5z" fill="#3a96dd" /></svg>
      </button>
      <button type="button" aria-label="Edge" className={cell}>
        <svg viewBox="0 0 36 36" className="h-9 w-9">
          <defs>
            <linearGradient id="ea" x1="0" y1="0" x2="1" y2=".6"><stop offset="0" stopColor="#2fb8f0" /><stop offset=".5" stopColor="#33c6d8" /><stop offset="1" stopColor="#66e04c" /></linearGradient>
            <linearGradient id="eb" x1="0" y1="0" x2="0" y2="1"><stop offset="0" stopColor="#1a9be8" /><stop offset="1" stopColor="#0a64c0" /></linearGradient>
          </defs>
          <path d="M1 15C3 5 10 0 18 0c10 0 18 7 18 15 0 6-4 9-9 9-4 0-6-1-6-3 0-1 2-2 2-5 0-4-4-7-9-7C8 9 3 12 1 15z" fill="url(#ea)" />
          <path d="M1 15c2-3 6-5 11-5 6 0 10 3 11 6-1-2-3-3-5-3-4 0-6 4-6 8 0 8 6 12 10 13-12 6-25-5-21-19z" fill="url(#eb)" />
          <path d="M12 20c0 8 7 12 14 10 3-1 5-2 7-4 1 0 1 1 0 2-3 5-8 8-13 8-6-2-10-9-8-16z" fill="#0f5497" />
        </svg>
      </button>
      <button type="button" aria-label="Store" className={cell}>
        <svg viewBox="0 0 36 36" className="h-9 w-9"><path d="M9 7V2q0-1 1-1h16q1 0 1 1v5" fill="none" stroke="#29b6f6" strokeWidth="2" /><path d="M1 5h34v26q0 4-4 4H5q-4 0-4-4z" fill="#f0f0f0" /><path d="M8 8V5h2v3zM26 8V5h2v3z" fill="#29b6f6" /><path d="M10 13h7v7h-7z" fill="#f25022" /><path d="M18 13h7v7h-7z" fill="#7fba00" /><path d="M10 21h7v7h-7z" fill="#00a4ef" /><path d="M18 21h7v7h-7z" fill="#ffb900" /></svg>
      </button>
      <button type="button" aria-label="QQ" className={cell}>
        <svg viewBox="0 0 30 36" className="h-9 w-[30px]"><ellipse cx="9" cy="33" rx="6" ry="2.500" fill="#f5a623" /><ellipse cx="21" cy="33" rx="6" ry="2.500" fill="#f5a623" /><path d="M15 0c7 0 10 5 10 11 0 3 0 4 1 6 3 4 4 8 3 10-1 1-2-1-3-2-1 5-5 8-11 8S5 30 4 25c-1 1-2 3-3 2-1-2 0-6 3-10 1-2 1-3 1-6C5 5 8 0 15 0z" fill="#000" /><ellipse cx="15" cy="25" rx="8.500" ry="8.500" fill="#fff" /><ellipse cx="12" cy="7" rx="2.200" ry="3.300" fill="#fff" /><ellipse cx="18" cy="7" rx="2.200" ry="3.300" fill="#fff" /><circle cx="12.700" cy="7.500" r="1" /><circle cx="17.300" cy="7.500" r="1" /><ellipse cx="15" cy="12" rx="6.500" ry="2" fill="#f5a623" /><path d="M3 15c7 3 17 3 24 0l1 5c-5 2-11 2-15 2v4l-5-1v-4l-6-2z" fill="#e81010" /></svg>
      </button>
      <button type="button" aria-label="WeChat" className={cell}>
        <svg viewBox="0 0 36 36" className="h-9 w-9"><rect width="36" height="36" fill="#06b012" /><path d="M4 15c0-5 4.500-8 10-8s10 3 10 8-4.500 8-10 8l-3-.5L7 25l1-4c-3-1.500-4-4-4-6z" fill="#fff" /><circle cx="10.500" cy="12.500" r="1.300" fill="#06b012" /><circle cx="17.500" cy="12.500" r="1.300" fill="#06b012" /><path d="M15 21c0-4 4-7 8.500-7s8.500 3 8.500 7c0 2-1 4-3 5l1 3-3-1.500c-6 2-12-1.500-12-6.500z" fill="#fff" stroke="#06b012" /><circle cx="20.500" cy="19" r="1" fill="#06b012" /><circle cx="26.500" cy="19" r="1" fill="#06b012" /></svg>
      </button>
      <button type="button" aria-label="Multisim" className="ml-[2px] flex h-full w-[73px] items-center justify-center border-b-[3px] border-[#76b9ed] bg-[#4c4e54]">
        <Logo className="h-[30px] w-9" />
      </button>
      <div className="flex-1" />
      <button type="button" className="mr-[44px] flex items-center gap-3 text-[20px]">
        <svg viewBox="0 0 38 40" className="mb-1 h-9 w-[36px]">
          <defs><linearGradient id="cl" x1="0" y1="0" x2="0" y2="1"><stop offset="0" stopColor="#88b4f8" /><stop offset="1" stopColor="#e0ecff" /></linearGradient></defs>
          <circle cx="26" cy="15" r="9" fill="#ff7043" /><circle cx="33" cy="5" r="4.500" fill="#c42b1c" />
          <path d="M8 38c-10 0-10-14 0-14 1-19 20-19 22-3 10 1 10 17 0 17z" fill="url(#cl)" />
        </svg>
        <span>12°C&nbsp; 多云</span>
      </button>
      <button type="button" aria-label="Show hidden icons" className="mr-[19px]"><svg viewBox="0 0 18 12" className="h-3 w-[18px]" fill="none" stroke="#fff" strokeWidth="1.500"><path d="M1 11l8-9 8 9" /></svg></button>
      <button type="button" aria-label="Network" className="mr-3"><svg viewBox="0 0 20 22" className="h-[22px] w-5" fill="none" stroke="#bbb" strokeWidth="1.300"><path d="M1 21C1 10 9 1 19 2M6 21c0-8 6-14 13-14M11 21c0-5 4-9 8-9" /><circle cx="17" cy="19" r="2" fill="#fff" stroke="none" /></svg></button>
      <button type="button" aria-label="Volume" className="mr-[10px]"><svg viewBox="0 0 24 20" className="h-5 w-6" fill="none" stroke="#fff" strokeWidth="1.200"><path d="M2 7h3l5-5v16l-5-5H2zM14 6l8 8M22 6l-8 8" /></svg></button>
      <button type="button" className="mr-[21px] w-6 text-[22px] font-medium">中</button>
      <button type="button" className="mr-5 flex h-[23px] w-[22px] items-center justify-center bg-white text-[19px] leading-5 text-black">拼</button>
      <button type="button" className="mr-[23px] w-[106px] text-center text-[18px] leading-[29px]">
        <span className="block">17:31</span>
        <span className="block">2022/10/30</span>
      </button>
      <button type="button" aria-label="Notifications" className="relative mr-[31px]">
        <svg viewBox="0 0 24 24" className="h-6 w-6"><path d="M0 0h24v19H14v5l-5-5H0z" fill="#fff" /><path d="M5 6h14M5 10h14M5 14h9" stroke="#20232b" strokeWidth="1.500" /></svg>
        <span className="absolute top-2 left-[10px] flex h-[26px] w-[26px] items-center justify-center rounded-full border border-[#999] bg-[#333] text-[17px] font-bold">2</span>
      </button>
      <div className="h-full w-[7px] border-l border-[#777]" />
      <p className="pointer-events-none absolute top-[26px] right-[15px] text-[19px] leading-6 whitespace-nowrap text-[#c8c8c8]/70">CSDN @清欢渡▯(¯=￣▯)</p>
    </footer>
  );
}

export default function App() {
  return (
    <div className='relative flex h-screen flex-col overflow-hidden bg-[#f0f0f0] font-["Open_Sans","Noto_Sans_CJK_SC",sans-serif] text-black'>
      <div className="absolute top-0 left-[779px] flex h-[2px] w-[362px]">
        <div className="w-[72px] bg-[#0078d7]" />
        <div className="flex-1 bg-[#222]" />
      </div>
      <header className="flex h-[35px] shrink-0 items-center bg-white pl-[2px]">
        <Logo className="h-5 w-6" />
        <h1 className="ml-1 flex-1 text-[19px] text-[#8c8c8c]">电路1 - Multisim - [电路1 *]</h1>
        <button type="button" aria-label="Minimize" className="flex w-[70px] justify-center"><Svg className="h-4 w-4"><path d="M0 7.500h16" stroke="#999" /></Svg></button>
        <button type="button" aria-label="Restore" className="flex w-[70px] justify-center"><Svg className="h-4 w-4"><path d="M.500 3.500h12v12h-12zM3.500 3V.500h12v12H13" stroke="#999" /></Svg></button>
        <button type="button" aria-label="Close" className="mr-[2px] flex w-[70px] justify-center"><Svg className="h-4 w-4"><path d="M.500.500l15 15M15.500.500l-15 15" stroke="#999" /></Svg></button>
      </header>
      <div className="flex h-[38px] shrink-0 items-center border-t border-b border-[#a8a8a8] pr-[5px] pl-[6px]">
        <Svg>{schem}</Svg>
        <nav className="ml-[11px] flex flex-1 gap-5 text-[17px] text-[#222]">
          {MENUS.map(([a, b, c]) => (
            <button type="button" key={b + c}>{a}<span className="underline underline-offset-2">{b}</span>{c}</button>
          ))}
        </nav>
        <div className="mt-1 flex gap-[2px]">
          <button type="button" aria-label="Minimize document" className={`flex h-[22px] w-[22px] items-center justify-center ${raised}`}><Svg className="h-4 w-4"><path d="M3 13h10" strokeWidth="3" /></Svg></button>
          <button type="button" aria-label="Restore document" className={`flex h-[22px] w-[22px] items-center justify-center ${raised}`}><Svg className="h-4 w-4"><path d="M5 5V2h10v7h-3M5 3h10M2 7h9v7H2zM2 8h9" strokeWidth="1.600" /></Svg></button>
          <button type="button" aria-label="Close document" className={`flex h-[22px] w-[22px] items-center justify-center ${raised}`}><Svg className="h-4 w-4"><path d="M3 3l10 10M13 3L3 13" strokeWidth="3" /></Svg></button>
        </div>
      </div>

      <Bar label="Standard" className="w-[401px] pr-[6px]">
        {["new", "open", "openBlue", "save", "print", "preview", "cutGray", "copyGray", "paste", "undo", "redo"].map((n) => <Btn key={n} name={n} />)}
      </Bar>
      <Bar label="Zoom" className="w-[194px] pr-[5px]">
        {["fullscreen", "zoomIn", "zoomOut", "zoomArea", "zoomFit"].map((n) => <Btn key={n} name={n} />)}
      </Bar>
      <Bar label="Main" className="w-[678px]">
        {["tree", "grid", "database", "wand"].map((n) => <Btn key={n} name={n} pressed={n === "tree"} />)}
        <button type="button" aria-label="Grapher" className="flex h-8 w-[51px] shrink-0 items-center justify-around border border-t-[#a0a0a0] border-r-white border-b-white border-l-[#a0a0a0] bg-[#f4f4f4]">
          <Svg>{ICON.graph}</Svg>
          <Svg className="h-2 w-2" box="0 0 8 8"><path d="M0 2h8L4 7z" fill="#000" stroke="none" /></Svg>
        </button>
        {["calc", "check", "select", "swap", "backAnn", "fwdAnn"].map((n) => <Btn key={n} name={n} />)}
        <div className="relative mr-[2px] ml-[3px] flex h-[31px] w-[219px] shrink-0 border-2 border-t-[#777] border-r-[#d8d8d8] border-b-[#d8d8d8] border-l-[#777] bg-white">
          <select aria-label="In use list" className="h-full w-full appearance-none pl-1 text-[18px] leading-7 text-[#222]">
            <option>--- In Use List ---</option>
          </select>
          <span className={`pointer-events-none absolute inset-y-0 right-0 flex w-6 items-center justify-center bg-[#f0f0f0] ${raised}`}>
            <Svg className="h-3 w-3" box="0 0 12 12"><path d="M0 3h11L5.500 9z" fill="#000" stroke="none" /></Svg>
          </span>
        </div>
        <button type="button" aria-label="Help" className="mr-1 flex w-9 shrink-0 justify-center">
          <Svg className="h-7 w-7"><path d="M4.500 6V3.500Q5 2 8 2q3.500 0 3.500 2.500 0 2-3 3.500v3M8.500 12.500V15" stroke="#00008b" strokeWidth="2.300" /></Svg>
        </button>
      </Bar>
      <Bar label="Simulation switch" className="w-[130px]">
        <button type="button" aria-label="Run or stop simulation" className="ml-[3px]">
          <Svg className="h-6 w-12" box="0 0 48 24"><rect x="1" y="1" width="46" height="22" fill="#bbb" strokeWidth="2" /><rect x="4" y="4" width="40" height="16" fill="#fff" /><ellipse cx="14" cy="12" rx="2.500" ry="3.500" strokeWidth="1.500" /><path d="M25 4l10-4v17l-10 3z" fill="#fff" strokeWidth="1.500" /><path d="M35 1l6 2v16H27l8-3z" fill="#999" /><path d="M30 7v6" strokeWidth="1.500" /></Svg>
        </button>
        <button type="button" aria-label="Pause simulation" className="mb-[3px] ml-[6px]">
          <Svg className="h-[22px] w-[46px]" box="0 0 46 22"><path d="M1 1h44v20H1zM1 5h44" stroke="#a8a8a8" strokeWidth="2" /><path d="M3 5v15" stroke="#a8a8a8" strokeWidth="2" /><path d="M21 8v10M27 8v10" stroke="#a8a8a8" strokeWidth="3" /></Svg>
        </button>
      </Bar>
      <Bar label="Components" className="w-[631px] pr-[5px]">
        {["source", "resistor", "diode", "transistor", "opampIcon", "ttl", "cmos", "miscDigital", "mixed", "indicator", "power", "misc", "periph", "motor"].map((n) => <Btn key={n} name={n} />)}
        <Sep />
        <Btn name="mcu" />
        <Sep />
        <Btn name="hier" />
        <Btn name="bus" />
      </Bar>
      <Bar label="Simulation" className="w-[367px] pr-[6px]">
        {["play", "pause", "stop", "record", "stepInto", "stepOver", "stepOut", "runTo", "hand", "handOff"].map((n) => <Btn key={n} name={n} pressed={n === "stop"} />)}
      </Bar>

      <main className="mt-px flex min-h-0 flex-1 border-t-2 border-[#909090]">
        <DesignToolbox />
        <div className="flex min-w-0 flex-1 flex-col">
          <div className="flex h-[628px] flex-col border-r-2 border-b border-[#808080] pt-1 pr-[6px] pb-[9px] pl-[5px]">
            <div className="flex min-h-0 flex-1 border-t-2 border-r border-b border-l-2 border-t-[#808080] border-r-white border-b-white border-l-[#808080]">
              <div className="flex min-w-0 flex-1 overflow-hidden bg-[#ababab]">
                <Schematic />
              </div>
              <div className="flex w-[26px] shrink-0 flex-col items-center justify-between bg-[#f0f0f0] py-2">
                <Svg className="h-3 w-4" box="0 0 16 12"><path d="M3 9l5-5 5 5" stroke="#555" strokeWidth="2.500" /></Svg>
                <div className="mt-[25px] mb-auto h-[316px] w-[22px] bg-[#cdcdcd]" />
                <Svg className="h-3 w-4" box="0 0 16 12"><path d="M3 3l5 5 5-5" stroke="#555" strokeWidth="2.500" /></Svg>
              </div>
            </div>
          </div>
          <div className="flex flex-1 items-start justify-between">
            <button type="button" className="-mt-px ml-1 flex h-9 w-[105px] items-center rounded-b-[3px] border-r-2 border-b-2 border-[#222] bg-[#f0f0f0] pt-[2px] pl-[5px] text-[18px]">
              <Svg>{schem}</Svg>
              <span className="ml-1 whitespace-nowrap">电路1 *</span>
            </button>
            <div className="mt-2 mr-[5px] flex">
              <button type="button" aria-label="Previous sheet" className={`flex h-[23px] w-[22px] items-center justify-center ${raised}`}><Svg className="h-3 w-3" box="0 0 12 12"><path d="M9 0v12L3 6z" fill="#00008b" stroke="none" /></Svg></button>
              <button type="button" aria-label="Next sheet" className={`flex h-[23px] w-[23px] items-center justify-center ${raised}`}><Svg className="h-3 w-3" box="0 0 12 12"><path d="M3 0v12l6-6z" fill="#00008b" stroke="none" /></Svg></button>
            </div>
          </div>
        </div>
        <div className="w-10 shrink-0">
          <div role="toolbar" aria-label="Instruments" className="flex flex-col items-center border-r-2 border-b-2 border-[#a0a0a0] pr-[2px] pb-[2px]">
            <div className="mt-[3px] mb-1 flex w-9 shrink-0 flex-col gap-1">
              <div className="h-[3px] border-t border-b border-t-white border-b-[#a0a0a0]" />
              <div className="h-[3px] border-t border-b border-t-white border-b-[#a0a0a0]" />
            </div>
            {INSTRUMENTS.map(([n, body]) => <VBtn key={n} name={n}>{body}</VBtn>)}
            <VSep />
            <VBtn name="Measurement probe">
              <path d="M1 1h6L5.500 3l4 3.500h4q2.500 0 2.500 2.500v4q0 2-2.500 2h-11Q0 15 0 13V9q0-2 2.500-2.500h2L3 4 1 6z" fill="#ff0" stroke="#aa0" strokeWidth=".7" />
              <T x="1" y="13" s="7">1.4v</T>
            </VBtn>
            <VArrow />
            <VSep />
            <VBtn name="LabVIEW instruments">{opamp}</VBtn>
            <VArrow />
            <VSep />
            <VBtn name="Current probe">
              <ellipse cx="5" cy="10" rx="3" ry="3.800" stroke="#800000" strokeWidth="3" transform="rotate(25 5 10)" />
              <path d="M8 7l3-3 5-3M9 7h3l4 3M11 4l5 1" strokeWidth="2" />
            </VBtn>
          </div>
        </div>
      </main>

      <div className="flex h-[25px] shrink-0 justify-end gap-1 text-[18px] leading-6 text-[#222]">
        <div className="w-[68px] border-t-2 border-l-2 border-[#a8a8a8] pl-[2px]">-</div>
        <div className="w-[173px] border-t-2 border-l-2 border-[#a8a8a8]" />
        <div className="w-[173px] border-t-2 border-l-2 border-[#a8a8a8] pl-px whitespace-nowrap">DCsweep:&nbsp; 2.000&nbsp; s</div>
        <div className="mr-[2px] flex w-[91px] gap-1 border-t-2 border-l-2 border-[#a8a8a8] p-[3px]">
          {[0, 1, 2, 3, 4, 5, 6].map((i) => <div key={i} className="flex-1 border-t-2 border-l-2 border-[#b0b0b0]" />)}
        </div>
      </div>
      <Taskbar />
      <Grapher />
    </div>
  );
}
